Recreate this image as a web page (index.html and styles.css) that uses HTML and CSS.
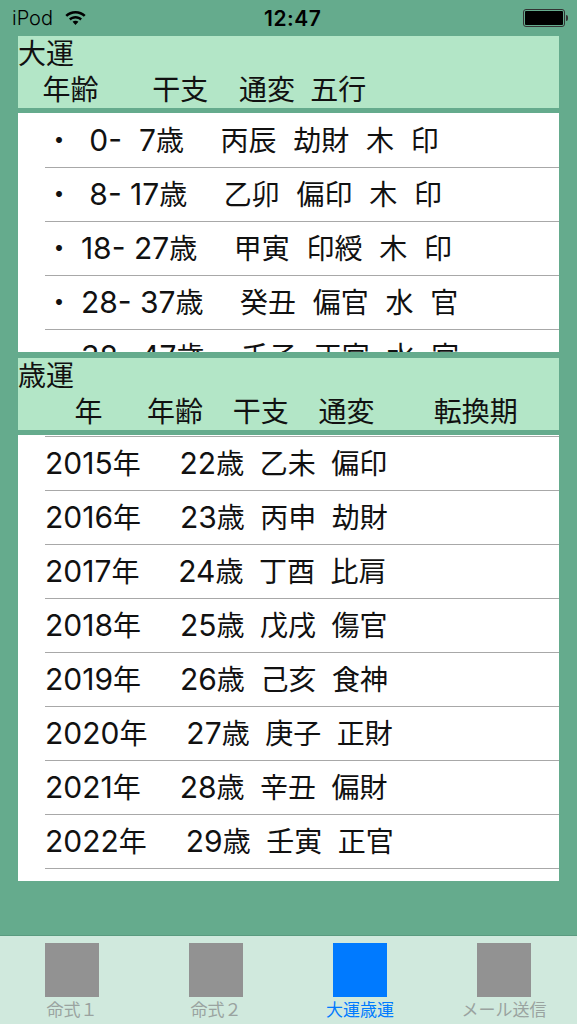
FILE: index.html
```html
<!DOCTYPE html>
<html lang="ja">
<head>
  <meta charset="UTF-8">
  <meta name="viewport" content="width=device-width, initial-scale=1.0">
  <title>大運歳運</title>
  <link rel="stylesheet" href="styles.css">
</head>
<body>
  <div class="status-bar">
    <div class="status-left">
      <span>iPod</span>
      <svg class="wifi" viewBox="0 0 24 18" fill="#000">
        <path d="M12 1C7.6 1 3.6 2.7.6 5.5l2 2.1C5 5.3 8.300 3.900 12 3.900s7 1.400 9.400 3.700l2-2.100C20.400 2.700 16.400 1 12 1z"/>
        <path d="M12 6.700c-2.800 0-5.400 1.100-7.300 2.900l2 2.100c1.400-1.300 3.300-2.100 5.300-2.100s3.900.8 5.300 2.100l2-2.100C17.400 7.800 14.800 6.700 12 6.700z"/>
        <path d="M12 12c-1.300 0-2.400.5-3.300 1.300L12 16.800l3.300-3.500C14.400 12.500 13.300 12 12 12z"/>
      </svg>
    </div>
    <div class="status-time">12:47</div>
    <div class="battery"><div class="battery-fill"></div></div>
  </div>

  <main class="content">
    <section class="section-head">
      <div>大運</div>
      <div class="cols cols-taiun">年齢       干支    通変  五行</div>
    </section>
    <div class="list list-taiun">
      <div class="row">・ <b> 0-  7</b>歳    <span class="tail">丙辰  劫財  木  印</span></div>
      <div class="row">・ <b> 8- 17</b>歳    <span class="tail">乙卯  偏印  木  印</span></div>
      <div class="row">・ <b>18- 27</b>歳    <span class="tail">甲寅  印綬  木  印</span></div>
      <div class="row">・ <b>28- 37</b>歳    <span class="tail">癸丑  偏官  水  官</span></div>
      <div class="row">・ <b>38- 47</b>歳    <span class="tail">壬子  正官  水  官</span></div>
    </div>

    <section class="section-head">
      <div>歳運</div>
      <div class="cols cols-saiun">年      年齢    干支    通変        転換期</div>
    </section>
    <div class="list list-saiun">
      <div class="row"><b>2015</b>年     <b>22</b>歳  乙未  偏印</div>
      <div class="row"><b>2016</b>年     <b>23</b>歳  丙申  劫財</div>
      <div class="row"><b>2017</b>年     <b>24</b>歳  丁酉  比肩</div>
      <div class="row"><b>2018</b>年     <b>25</b>歳  戊戌  傷官</div>
      <div class="row"><b>2019</b>年     <b>26</b>歳  己亥  食神</div>
      <div class="row"><b>2020</b>年     <b>27</b>歳  庚子  正財</div>
      <div class="row"><b>2021</b>年     <b>28</b>歳  辛丑  偏財</div>
      <div class="row"><b>2022</b>年     <b>29</b>歳  壬寅  正官</div>
    </div>
  </main>

  <nav class="tab-bar">
    <div class="tab"><div class="tab-icon"></div><div class="tab-label">命式１</div></div>
    <div class="tab"><div class="tab-icon"></div><div class="tab-label">命式２</div></div>
    <div class="tab active"><div class="tab-icon"></div><div class="tab-label">大運歳運</div></div>
    <div class="tab"><div class="tab-icon"></div><div class="tab-label">メール送信</div></div>
  </nav>
</body>
</html>
```

FILE: styles.css
```css
:root {
  --bg-color: #65ab8d;
  --head-color: #b3e6c7;
  --line-color: #a8a8a8;
  --active-color: #007aff;
}

* {
  box-sizing: border-box;
}

body {
  margin: 0;
  width: 577px;
  height: 1024px;
  overflow: hidden;
  display: flex;
  flex-direction: column;
  background-color: var(--bg-color);
  font-family: Inter, "Noto Sans CJK JP", sans-serif;
  color: #111;
}

.status-bar {
  height: 36px;
  padding: 0 10px 0 12px;
  display: flex;
  align-items: center;
  justify-content: space-between;
  position: relative;
  font-size: 20px;
  font-weight: 300;
  color: #000;
}

.status-left {
  display: flex;
  align-items: center;
  gap: 11px;
}

.wifi {
  width: 23px;
  height: 16px;
}

.status-time {
  position: absolute;
  left: 264px;
  font-size: 21px;
  font-weight: 600;
  letter-spacing: 0.5px;
}

.battery {
  width: 42px;
  height: 18px;
  border: 1px solid #333;
  border-radius: 3px;
  padding: 1px;
  margin-right: 2px;
  position: relative;
}

.battery::after {
  content: "";
  position: absolute;
  right: -4px;
  top: 5px;
  width: 2px;
  height: 6px;
  background-color: #333;
  border-radius: 0 2px 2px 0;
}

.battery-fill {
  height: 100%;
  background-color: #000;
  border-radius: 1px;
}

.content {
  flex: 1;
  padding: 0 18px;
}

.section-head {
  height: 72px;
  background-color: var(--head-color);
  font-size: 28px;
  line-height: 36px;
  margin-bottom: 5px;
}

.cols {
  white-space: pre;
}

.cols-taiun {
  padding-left: 24.5px;
  word-spacing: -0.2px;
}

.cols-saiun {
  padding-left: 56.5px;
  word-spacing: -0.45px;
}

.list {
  background-color: #fff;
  overflow: hidden;
  padding: 1px 0 0 27px;
}

.list-taiun {
  height: 239px;
  margin-bottom: 6px;
}

.list-saiun {
  height: 446px;
  word-spacing: -0.1px;
}

.list-saiun .row:first-child {
  height: 55px;
  border-top: 1px solid var(--line-color);
}

.row {
  height: 54px;
  line-height: 53px;
  font-size: 28px;
  white-space: pre;
  border-bottom: 1px solid var(--line-color);
}

/* digits run a little larger than the kanji */
.row b {
  font-size: 30px;
  font-weight: 400;
}

.tail {
  padding-left: 5px;
  word-spacing: 0.5px;
}

.tab-bar {
  height: 89px;
  padding-right: 1px;
  display: grid;
  grid-template-columns: repeat(4, 1fr);
  background-color: #d0e9dd;
  border-top: 1px solid #5a9b80;
}

.tab {
  display: flex;
  flex-direction: column;
  align-items: center;
  padding-top: 7px;
  color: #9aa3a0;
}

.tab-icon {
  width: 54px;
  height: 54px;
  background-color: #929292;
}

.tab-label {
  font-size: 17px;
  line-height: 26px;
}

.tab.active {
  color: var(--active-color);
}

.tab.active .tab-icon {
  background-color: var(--active-color);
}
```
